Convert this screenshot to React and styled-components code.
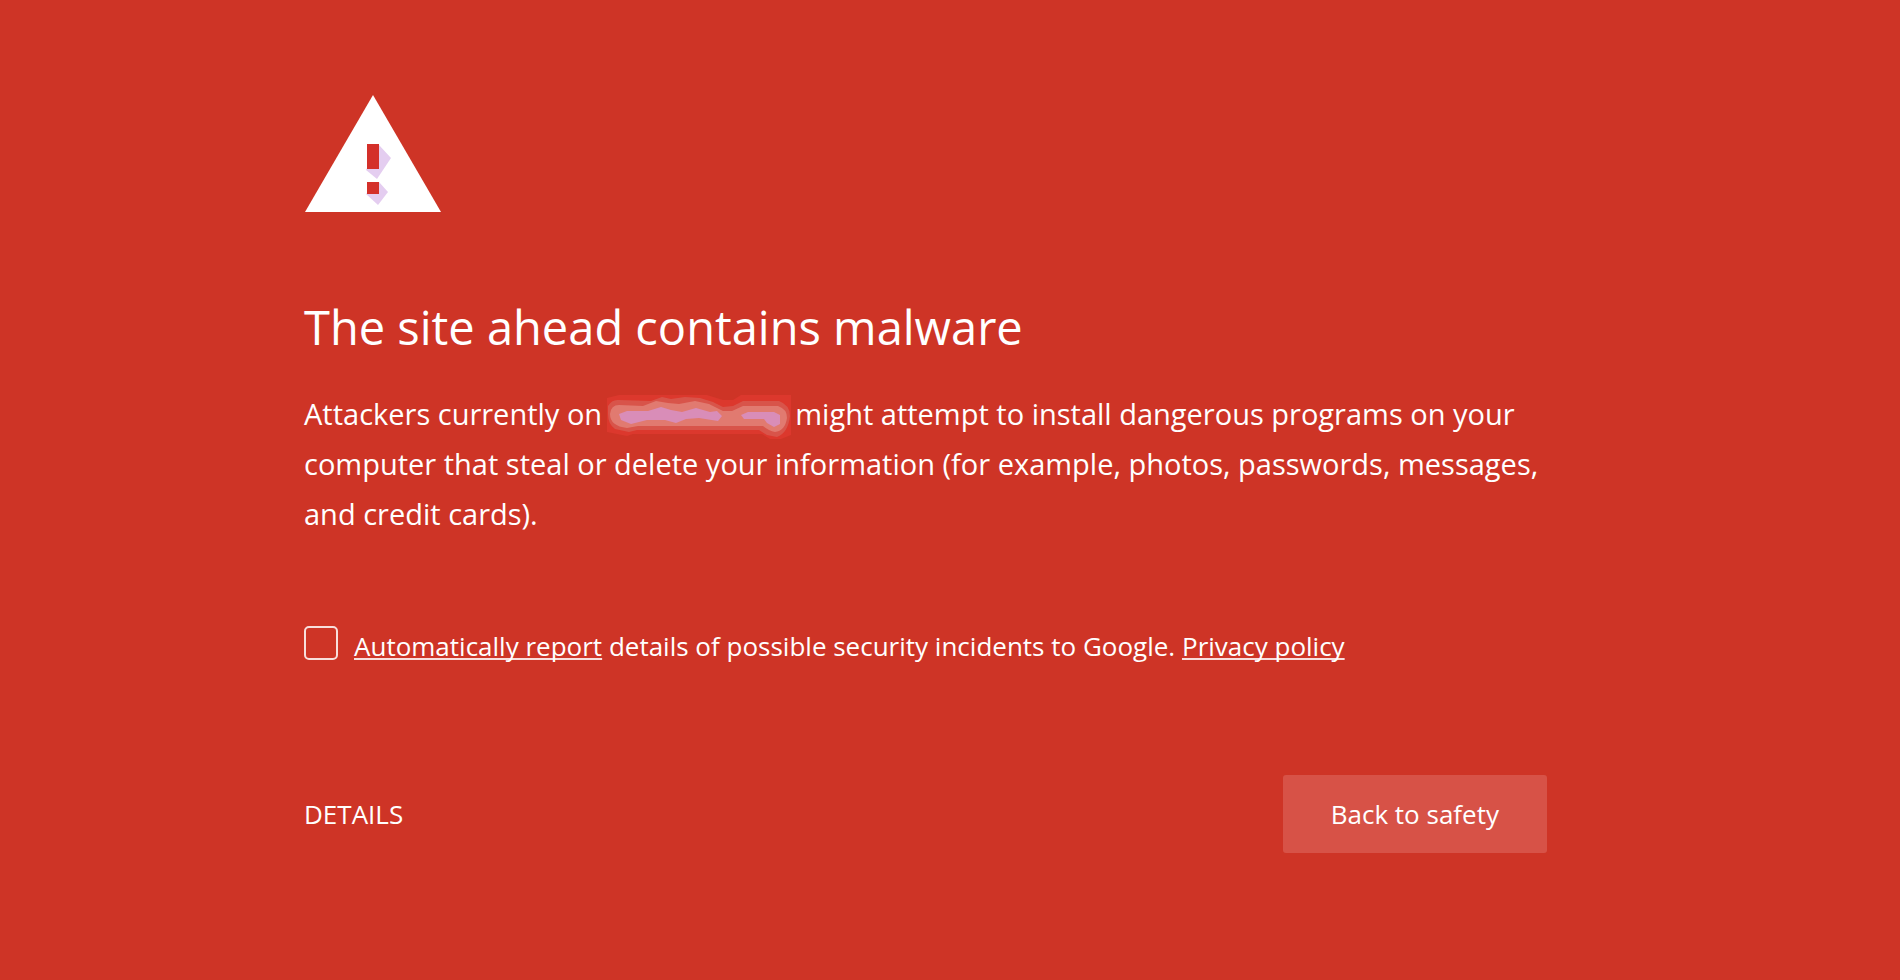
import React from "react";
import styled, { createGlobalStyle } from "styled-components";

const GlobalStyle = createGlobalStyle`
  body {
    margin: 0;
    background-color: #ce3426;
    color: #fff;
    font-family: "Segoe UI", "Open Sans", "Noto Sans", sans-serif;
  }
`;

const Page = styled.main`
  box-sizing: border-box;
  min-height: 100vh;
  padding: 95px 16% 0;
`;

const Content = styled.div`
  max-width: 1243px;
`;

const WarningSvg = styled.svg`
  display: block;
  width: 137px;
  height: 118px;
`;

const Title = styled.h1`
  margin: 80px 0 0;
  font-size: 47px;
  font-weight: 400;
  line-height: 68px;
`;

const Message = styled.p`
  margin: 28px 0 0;
  font-size: 29px;
  line-height: 50px;
`;

const SmudgeSvg = styled.svg`
  width: 184px;
  height: 44px;
  vertical-align: middle;
  margin: -4px -3px;
`;

const ReportRow = styled.div`
  display: flex;
  align-items: flex-start;
  gap: 16px;
  margin-top: 87px;
`;

const Checkbox = styled.input`
  appearance: none;
  flex: none;
  box-sizing: border-box;
  width: 34px;
  height: 34px;
  margin: 0;
  border: 2px solid #f8dedc;
  border-radius: 5px;
  background-color: transparent;

  &:checked {
    background-color: #fff;
  }
`;

const ReportText = styled.label`
  font-size: 26px;
  line-height: 40px;
`;

const Link = styled.a`
  color: #fff;
  text-decoration: underline 2px #f8dedc;
  text-decoration-skip-ink: none;
  text-underline-offset: 2px;
`;

const Actions = styled.div`
  display: flex;
  align-items: center;
  justify-content: space-between;
  margin-top: 109px;
`;

const Button = styled.button`
  border: none;
  border-radius: 3px;
  padding: ${({ $primary }) => ($primary ? "19px 48px" : "19px 0")};
  background-color: ${({ $primary }) => ($primary ? "#d75247" : "transparent")};
  color: #fff;
  font-family: inherit;
  font-size: 26px;
  line-height: 40px;
  cursor: pointer;
`;

const WarningIcon = () => {
  return (
    <WarningSvg viewBox="0 0 137 118" aria-hidden="true">
      <polygon points="69,0 137,117 1,117" fill="#fff" />
      <polygon points="75,50 87,63 73,84 62,75" fill="#e4cdf0" />
      <polygon points="75,87 84,97 74,110 62,99" fill="#e4cdf0" />
      <rect x="63" y="49" width="12" height="25" fill="#d4302a" />
      <rect x="63" y="87" width="12" height="12" fill="#d4302a" />
    </WarningSvg>
  );
};

const Smudge = () => {
  return (
    <SmudgeSvg viewBox="0 0 184 44" aria-hidden="true">
      <path
        d="M0 3 L12 0 H100 L116 5 L126 5 L134 0 H184 V40 L174 44 H163 L155 39 H26 L20 41 L0 37 Z"
        fill="#dc382d"
      />
      <path
        d="M1 11 Q5 4 12 5 L44 6 L55 2 L64 4 L78 2 L93 3 L106 7 L116 12 L126 11 L136 6 L172 6 Q183 10 183 21 Q181 38 170 42 L160 40 L152 35 H30 L22 37 L8 34 Q1 29 1 19 Z"
        fill="#d8544a"
      />
      <path
        d="M3 19 Q4 10 12 10 L36 11 L49 6 L61 8 L72 9 L88 6 L102 9 L116 16 L125 16 L136 11 H171 Q180 14 180 23 Q178 36 168 37 Q162 36 156 31 L31 31 L20 33 Q3 31 3 19 Z"
        fill="#e17a70"
      />
      <path
        d="M12 19 L20 16 L41 16 L54 12 L64 15 L75 17 L89 13 L103 17 L110 16 L115 21 L111 26 L92 23 L79 24 L69 28 L58 25 L40 25 L24 29 L14 25 Z"
        fill="#d98db8"
      />
      <path
        d="M134 20 L141 17 H167 L173 20 L173 29 L167 32 L160 28 L157 24 H137 Z"
        fill="#d98db8"
      />
    </SmudgeSvg>
  );
};

const App = () => {
  return (
    <>
      <GlobalStyle />
      <Page>
        <Content>
          <WarningIcon />
          <Title>The site ahead contains malware</Title>
          <Message>
            Attackers currently on <Smudge /> might attempt to install dangerous
            programs on your computer that steal or delete your information (for
            example, photos, passwords, messages, and credit cards).
          </Message>
          <ReportRow>
            <Checkbox type="checkbox" id="report" />
            <ReportText htmlFor="report">
              <Link href="#report">Automatically report</Link> details of
              possible security incidents to Google.{" "}
              <Link href="#privacy">Privacy policy</Link>
            </ReportText>
          </ReportRow>
          <Actions>
            <Button type="button">DETAILS</Button>
            <Button type="button" $primary>
              Back to safety
            </Button>
          </Actions>
        </Content>
      </Page>
    </>
  );
};

export default App;
